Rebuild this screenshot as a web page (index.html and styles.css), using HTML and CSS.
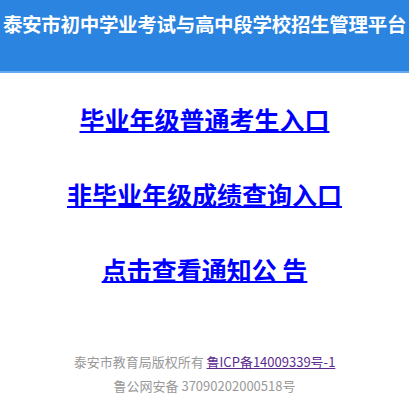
FILE: index.html
```html
<!DOCTYPE html>
<html lang="zh-CN">
<head>
<meta charset="utf-8">
<title>泰安市初中学业考试与高中段学校招生管理平台</title>
<link rel="stylesheet" href="styles.css">
</head>
<body>
<header class="top">
  <h1 class="title">泰安市初中学业考试与高中段学校招生管理平台</h1>
</header>
<main class="links">
  <a class="entry" href="#">毕业年级普通考生入口</a>
  <a class="entry" href="#">非毕业年级成绩查询入口</a>
  <a class="entry" href="#">点击查看通知公 告</a>
</main>
<footer class="foot">
  <p class="line">泰安市教育局版权所有 <a class="icp" href="#">鲁ICP备14009339号-1</a></p>
  <p class="line">鲁公网安备 37090202000518号</p>
</footer>
</body>
</html>
```
FILE: styles.css
```css
html, body {
  margin: 0;
  padding: 0;
  background: #fff;
  font-family: "Noto Sans CJK SC", "Noto Sans", sans-serif;
}
.top {
  height: 71px;
  background: #2a84e0;
  border-bottom: 2px solid #64a8ef;
  box-sizing: content-box;
}
.title {
  margin: 0;
  padding-top: 10px;
  text-align: center;
  color: #fff;
  font-size: 19.5px;
  line-height: 28px;
  font-weight: bold;
  letter-spacing: -0.3px;
  white-space: nowrap;
  overflow: hidden;
}
.links {
  display: flex;
  flex-direction: column;
  align-items: center;
  gap: 39px;
  padding-top: 28px;
}
.entry {
  color: #0000ff;
  font-size: 25px;
  line-height: 36px;
  font-weight: bold;
  text-decoration: underline;
  text-decoration-thickness: 2px;
}
.foot {
  margin-top: 63px;
  text-align: center;
  color: #999;
  font-size: 13px;
}
.line {
  margin: 0;
  line-height: 24px;
}
.icp {
  color: #5c2a8f;
  text-decoration: underline;
}
```
